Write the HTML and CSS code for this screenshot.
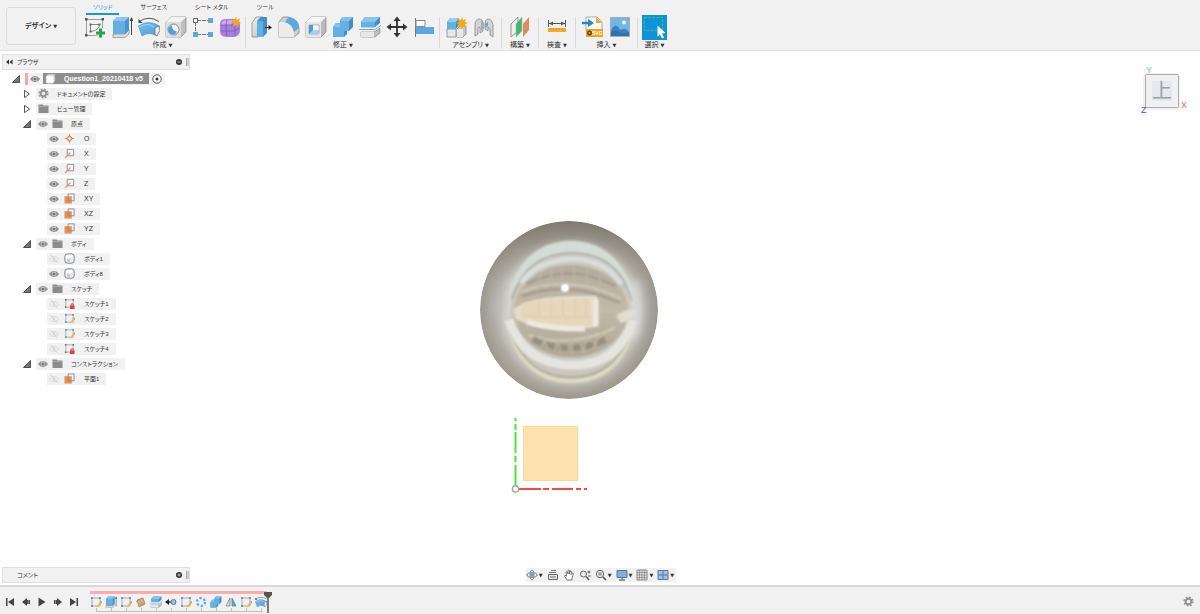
FILE: index.html
```html
<!DOCTYPE html>
<html lang="ja">
<head>
<meta charset="utf-8">
<meta name="viewport" content="width=device-width, initial-scale=1">
<title>Question1_20210418 v5</title>
<link rel="stylesheet" href="styles.css">
</head>
<body>
<svg class="defs" aria-hidden="true">
  <defs>
    <linearGradient id="g-blue" x1="0" y1="0" x2="1" y2="1"><stop offset="0" stop-color="#79bdec"/><stop offset="1" stop-color="#4f9fd8"/></linearGradient>
    <linearGradient id="g-grey" x1="0" y1="0" x2="1" y2="1"><stop offset="0" stop-color="#f4f4f4"/><stop offset="1" stop-color="#b9b9b9"/></linearGradient>
  </defs>
  <!-- tree icons -->
  <symbol id="eye" viewBox="0 0 10 10"><path d="M0 5Q2 2 5 2t5 3Q8 8.200 5 8.200T0 5Z" fill="#8f8f8f"/><circle cx="5" cy="5" r="2.300" fill="#d6d6d6"/><circle cx="5" cy="5" r="1.600" fill="#777"/></symbol>
  <symbol id="eye-off" viewBox="0 0 10 10"><path d="M.5 5Q2 2.500 5 2.500T9.500 5Q8 7.700 5 7.700T.5 5Z" fill="none" stroke="#d9d9d9"/><circle cx="5" cy="5" r="1.500" fill="#d9d9d9"/><path d="M1.500 1l7 8" stroke="#d4d4d4"/></symbol>
  <symbol id="folder" viewBox="0 0 11 10"><path d="M.5 1h4l1 1h5v7.500H.5Z" fill="#8b8b8b"/><path d="M.5 3h10" stroke="#b5b5b5" stroke-width=".6"/></symbol>
  <symbol id="gear" viewBox="0 0 12 12"><circle cx="6" cy="6" r="4.600" fill="none" stroke="#939393" stroke-width="2" stroke-dasharray="1.900 1.710"/><circle cx="6" cy="6" r="3" fill="none" stroke="#939393" stroke-width="2"/></symbol>
  <symbol id="open" viewBox="0 0 8 8"><path d="M7.500.5v7H.5Z" fill="#777" stroke="#333" stroke-width=".8"/></symbol>
  <symbol id="closed" viewBox="0 0 8 8"><path d="M1.500.3 6.500 4 1.500 7.700Z" fill="#fff" stroke="#444" stroke-width=".9"/></symbol>
  <symbol id="point" viewBox="0 0 12 12"><path d="M6 1v10M1 6h10" stroke="#e08a55"/><path d="M6 3 9 6 6 9 3 6Z" fill="#fff" stroke="#de7f46" stroke-width="1.300"/></symbol>
  <symbol id="axis" viewBox="0 0 12 12"><path d="M3.500 1.500h7v7h-7Z" fill="#f7f7f7" stroke="#8b8f94"/><path d="M1 11 7 5" stroke="#e58b57" stroke-width="1.200"/></symbol>
  <symbol id="plane" viewBox="0 0 12 12"><path d="M4.500 1h6.500v7.500H4.500Z" fill="#f7f7f7" stroke="#85898c"/><path d="M.5 3.500h8V11.500h-8Z" fill="#e39257"/><path d="M4.500 4v4.500H8" fill="none" stroke="#c4763d" stroke-width=".8"/></symbol>
  <symbol id="body" viewBox="0 0 12 12"><rect x="1" y="1" width="10" height="10" rx="2.500" fill="#fdfdfd" stroke="#6f7580"/><path d="M3 6h3.500v4H3Z" fill="#ccd0d6"/><path d="M6.500 5h3v4.500h-3Z" fill="#e6e8eb"/></symbol>
  <symbol id="sk-lock" viewBox="0 0 12 12"><path d="M2 2h8v8H2Z" fill="none" stroke="#999" stroke-width=".8"/><path d="M1 1h1.700v1.700H1ZM9.300 1H11v1.700H9.300ZM1 9.300h1.700V11H1Z" fill="#6e6e6e"/><path d="M6.500 8h5v4h-5Z" fill="#db4047"/><path d="M7.700 8V6.500h2.500V8" fill="none" stroke="#db4047"/></symbol>
  <symbol id="sk" viewBox="0 0 12 12"><path d="M2 2h8v8H2Z" fill="none" stroke="#999" stroke-width=".8"/><path d="M1 1h2v2H1ZM9 1h2v2H9ZM1 9h2v2H1Z" fill="#4da3df"/><path d="m6.500 11.500.5-2 4-4 1 1.500L8 11Z" fill="#f4b63e"/><path d="m10.400 5.700.9-.7.7 1.300-.8.800Z" fill="#df665b"/></symbol>
  <symbol id="cube" viewBox="0 0 12 12"><path d="M1 3.500 3.500 1H11v7.500L8.500 11H1Z" fill="#c7c7c7"/><rect x="1.500" y="3" width="8" height="8" rx="1.500" fill="#fff" stroke="#e2e2e2"/></symbol>
  <symbol id="target" viewBox="0 0 10 10"><circle cx="5" cy="5" r="4.200" fill="#fff" stroke="#444" stroke-width=".9"/><circle cx="5" cy="5" r="1.500" fill="#333"/></symbol>
  <!-- create -->
  <symbol id="i-sketch" viewBox="0 0 22 22"><path d="M2.500 3.500h16v16h-16Z" fill="none" stroke="#888" stroke-width=".8"/><path d="M1 2h2.500v2.500H1ZM17.500 2H20v2.500h-2.500ZM1 18h2.500v2.500H1Z" fill="#555"/><path d="M6.500 15.500V8.500H15.500Q15 14.500 6.500 15.500Z" fill="#f5f5f5" stroke="#777" stroke-width=".9"/><path d="M5.500 7.500h2v2h-2ZM14.500 7.500h2v2h-2ZM5.500 14.500h2v2h-2Z" fill="#666"/><path d="M16.500 12v10M11.500 17h10" stroke="#f1f1f1" stroke-width="5"/><path d="M16.500 12.500v9M12 17h9" stroke="#21a847" stroke-width="3"/></symbol>
  <symbol id="i-extrude" viewBox="0 0 22 22"><path d="M2 18h12l4-4v4l-4 3.500H2Z" fill="#ddd" stroke="#888" stroke-width=".7"/><path d="M2 5 6 1h12v13l-4 4H2Z" fill="#4897cf"/><path d="M2 5h12v13H2Z" fill="#65afe3"/><path d="M2 5 6 1h12l-4 4Z" fill="#8cc7ef"/><path d="M20.500 19V4" stroke="#444"/><path d="m18.500 5 2-4 2 4Z" fill="#444"/></symbol>
  <symbol id="i-revolve" viewBox="0 0 22 22"><path d="M1 5.500Q11-1 21 5.500" fill="none" stroke="#555"/><path d="M.5 3v4h4Z" fill="#444"/><path d="M.5 10Q10 3 21.500 10L19 20q-8-5-15 0Z" fill="url(#g-blue)" stroke="#438dc5" stroke-width=".6"/><path d="M1 11q10-5 15 0" fill="none" stroke="#a1d1f1"/><path d="m17 12 4-2 .7 4.500L19 20l-2-2Z" fill="#eee" stroke="#777" stroke-width=".8"/></symbol>
  <symbol id="i-hole" viewBox="0 0 22 22"><path d="M1 6 6 1h15v15l-5 5H1Z" fill="#bfbfbf" stroke="#888" stroke-width=".7"/><path d="M1 6h15v15H1Z" fill="#dedede"/><path d="M1 6 6 1h15l-5 5Z" fill="#f3f3f3"/><circle cx="8.500" cy="13.500" r="5.500" fill="#f5f5f5" stroke="#858585"/><path d="M7 9.500a4.500 4.500 0 1 0 5 6Q7 15 7 9.500Z" fill="#4da2dc"/></symbol>
  <symbol id="i-pattern" viewBox="0 0 22 22"><path d="M5 4.500h12M3.500 6v12M5 18.500h12" stroke="#777" stroke-dasharray="4 1"/><rect x="1.500" y="2.500" width="4" height="4" fill="#fff" stroke="#666"/><path d="M16 2h5v5h-5ZM1 16h5v5H1ZM16 16h5v5h-5Z" fill="#5aa9e1"/></symbol>
  <symbol id="i-form" viewBox="0 0 22 22"><path d="M1 8Q1 3 7 3h8q6 1 6 6v5q0 6-6 7H8q-7 0-7-6Z" fill="#a67fdd"/><path d="M2 9Q3 4 8 4h6l-2 5Z" fill="#c9aaf0"/><path d="M2 9h12q2 0 2 3v8M8 4Q6 8 8 20M2 15h13l5-3M14 9l4-4" fill="none" stroke="#7d52bb" stroke-width=".8"/><path d="m17 0 1 4 3-2-1 3.500 2 1.500-3 .7.500 3.300-2.500-2-3 2 .5-3.500L11 7l3.300-1L13 2l3 2Z" fill="#f8a815"/></symbol>
  <!-- modify -->
  <symbol id="i-press" viewBox="0 0 22 22"><path d="M1 7 5 1h7v14l-5 6H1Z" fill="url(#g-grey)" stroke="#888" stroke-width=".8"/><path d="M6 5 10 1h6v16l-4 4H6Z" fill="#3f90cc"/><path d="M6 5h6v16H6Z" fill="#64afe3"/><path d="M14 11.500h5" stroke="#222"/><path d="m17.500 9 3.500 2.500-3.500 2.500Z" fill="#222"/></symbol>
  <symbol id="i-fillet" viewBox="0 0 22 22"><path d="M1 6 5 1h5q11 2 11 12v4l-5 4H1Z" fill="#cecece" stroke="#888" stroke-width=".8"/><path d="M1 6h4q11 2 11 11v4H1Z" fill="#ececec"/><path d="M7 6 11 1q10 2 10 11l-5 4Q14 8 7 6Z" fill="#5ba9df"/></symbol>
  <symbol id="i-shell" viewBox="0 0 22 22"><path d="M1 6 6 1h15v15l-5 5H1Z" fill="#b9b9b9" stroke="#888" stroke-width=".7"/><path d="M1 6h15v15H1Z" fill="#e7e7e7"/><path d="M1 6 6 1h15l-5 5Z" fill="#f6f6f6"/><path d="M4 9h10v9H4Z" fill="#fff" stroke="#888" stroke-width=".6"/><path d="M4 9v9h10v-4H8V9Z" fill="#4a9ed8"/><path d="M8 14h6v4H4Z" fill="#9fd0f2"/></symbol>
  <symbol id="i-combine" viewBox="0 0 22 22"><path d="M1 11 4 7h4V4l3-3h10v10l-4 4h-2v3l-3 3H1Z" fill="#3e8fcc"/><path d="M1 11h7V5h9v10h-5v6H1Z" fill="#64afe3"/><path d="m8 5 3-4h10l-4 4ZM1 11l3-4h4v4Z" fill="#83c1ed"/></symbol>
  <symbol id="i-split" viewBox="0 0 22 22"><path d="M2 16h13l6-4v5l-5 4H2Z" fill="#bdbdbd" stroke="#888" stroke-width=".7"/><path d="M2 16h13v5H2Z" fill="#e7e7e7"/><path d="M0 13h16l6-4" fill="none" stroke="#fff" stroke-width="3"/><path d="M0 13.500h16l6-4" fill="none" stroke="#59abe4"/><path d="M2 6 6 1h15v6l-5 4H2Z" fill="#3f90cd"/><path d="M2 6h14v5.500H2Z" fill="#64afe3"/><path d="M2 6 6 1h15l-5 5Z" fill="#87c5ef"/></symbol>
  <symbol id="i-move" viewBox="0 0 22 22"><path d="M11 3v16M3 11h16" stroke="#333" stroke-width="1.800"/><path d="m7.500 5L11 .5 14.500 5ZM7.500 17l3.500 4.500 3.500-4.500ZM5 7.500.5 11 5 14.500ZM17 7.500l4.500 3.500-4.500 3.500Z" fill="#333"/></symbol>
  <symbol id="i-align" viewBox="0 0 22 22"><path d="M2.500 2v19" stroke="#777"/><path d="M3 4.500h9v6H3Z" fill="#fff" stroke="#888"/><path d="M3 11h18v7H3Z" fill="#5aa8df"/></symbol>
  <!-- assemble / construct / inspect / insert / select -->
  <symbol id="i-comp" viewBox="0 0 22 22"><path d="M1 13h9v8H1Z" fill="#e7e7e7" stroke="#858585" stroke-width=".8"/><path d="m11 13 3-3h6v8l-3 3h-6Z" fill="#c8c8c8" stroke="#858585" stroke-width=".8"/><path d="M11 13h6v8h-6Z" fill="#e7e7e7"/><path d="m1 6 3-4h9v7l-3 4H1Z" fill="#408fca"/><path d="M1 6h9v7H1Z" fill="#65afe3"/><path d="m1 6 3-4h9l-3 4Z" fill="#96cff3"/><path d="m16 1 1 3 3-1-1 3 3 1-3 1.500 1 3-3-1-1 2.500-1.500-3-3 1 1-3L10 7l3-1-1-3 3 1Z" fill="#f8a815"/></symbol>
  <symbol id="i-joint" viewBox="0 0 22 22"><path d="M2 20V9q0-6 5-6 3 1 3 4v8l-3 2v-6l-2 1v6Z" fill="#d4d4d4" stroke="#888" stroke-width=".8"/><path d="m8 5 3 2v5l-3 3Z" fill="#aaa"/><path d="M20 21V9q-1-6-5-6-3 1-3 4v6l3 2v-4l2 2v6Z" fill="#d4d4d4" stroke="#888" stroke-width=".8"/><path d="m12 8 3-2v4l-3 2Z" fill="#5ca6df"/></symbol>
  <symbol id="i-construct" viewBox="0 0 22 22"><path d="M2 8 9 1v14l-7 6Z" fill="#eee" stroke="#888" stroke-width=".9"/><path d="m7 8 6-7v14l-6 6Z" fill="#46b46d" stroke="#87c99e" stroke-width=".6"/><path d="m14 8 6-7v13l-6 7Z" fill="#df8b5d"/></symbol>
  <symbol id="i-measure" viewBox="0 0 22 22"><path d="M2.500 4v7M19.500 4v7M3 7.500h16" stroke="#555"/><path d="m3 7.500 4-2v4ZM19 7.500l-4-2v4Z" fill="#555"/><path d="M2 12h18v4H2Z" fill="#f4ab28"/><path d="M4.500 12v2M7.500 12v2M10.500 12v2M13.500 12v2M16.500 12v2" stroke="#c98a1e" stroke-width=".7"/></symbol>
  <symbol id="i-image" viewBox="0 0 22 22"><path d="M1.500 1.500h19v19h-19Z" fill="#70b7e8" stroke="#aab"/><path d="M2 14q5-8 8-2 1 3 4 1 3-1 6 3v4H2Z" fill="#3a83ba"/><path d="M2 17q4-4 8-1 3 2 10 0v4H2Z" fill="#2d74ae"/><circle cx="15" cy="6.500" r="2" fill="#fff4c4"/></symbol>
  <symbol id="i-select" viewBox="0 0 25 25"><path d="M0 0h25v25H0Z" fill="#0c94d6"/><path d="M2.500 2.500h18v13h-18Z" fill="none" stroke="#45bd7d" stroke-dasharray="2.500 1.500"/><path d="M15.500 10.500v11l2.500-2 2 4 2-1-2-4 3.500-.5Z" fill="#fff"/></symbol>
  <!-- timeline -->
  <symbol id="t-rect" viewBox="0 0 12 12"><path d="m2 4 6-2 2 6-6 3Z" fill="#eba987" stroke="#90785f" stroke-width=".7"/><path d="M1 6 7 2M4 10l6-4M4 3l4 6" stroke="#79a66e" stroke-width=".7"/></symbol>
  <symbol id="t-move" viewBox="0 0 12 12"><path d="M3 6h5" stroke="#222" stroke-width="1.300"/><path d="M4 3 0 6l4 3Z" fill="#222"/><circle cx="8.500" cy="6" r="2.500" fill="#a4bfe8" stroke="#5c7199"/></symbol>
  <symbol id="t-circ" viewBox="0 0 12 12"><circle cx="6" cy="6" r="4" fill="none" stroke="#5daae2" stroke-width="2.300" stroke-dasharray="2.300 1.890"/></symbol>
  <symbol id="t-mirror" viewBox="0 0 12 12"><path d="M5 2v8H1Z" fill="#ddd" stroke="#777" stroke-width=".7"/><path d="M7 2v8h4Z" fill="#5ca9df" stroke="#4280b0" stroke-width=".7"/></symbol>
  <symbol id="p-first" viewBox="0 0 10 10"><path d="M1 1h1.500v8H1ZM9 1v8L3 5Z" fill="#444"/></symbol>
  <symbol id="p-prev" viewBox="0 0 10 10"><path d="M6 1v8L1 5ZM6 3h3v4H6Z" fill="#444"/><path d="M7.500 3v4" stroke="#aaa" stroke-width=".7"/></symbol>
  <symbol id="p-play" viewBox="0 0 10 10"><path d="m1.500.5 7 4.500-7 4.500Z" fill="#444"/></symbol>
  <!-- navigation -->
  <symbol id="n-orbit" viewBox="0 0 12 12"><ellipse cx="6" cy="6" rx="5" ry="2.300" fill="none" stroke="#777"/><ellipse cx="6" cy="6" rx="2" ry="5" fill="none" stroke="#888"/><path d="M6 4v4M4 6h4" stroke="#4f9dd5" stroke-width="1.300"/></symbol>
  <symbol id="n-look" viewBox="0 0 12 12"><path d="M1.500 5.500h9v5h-9Z" fill="#e3e3e3" stroke="#686868"/><path d="M2 3.500h7M4 1.500h5M3 8h6" stroke="#707070"/></symbol>
  <symbol id="n-hand" viewBox="0 0 12 12"><path d="M4 11 1.500 7q0-1.500 2 0L3 3q1-1 1.500 0L5 5V1.500q1-1 1.500 0V5l.7-3q1-.6 1.300.5L8 5.500 9.500 4q1 0 .8 1L9 9v2Z" fill="#fff" stroke="#666" stroke-width=".9"/></symbol>
  <symbol id="n-zoom" viewBox="0 0 12 12"><circle cx="4.500" cy="5" r="3" fill="#e9f2f8" stroke="#666"/><path d="m7 7.500 3 3.500" stroke="#555" stroke-width="1.500"/><path d="M8.500 3h3M10 1.500v3M9 7h3" stroke="#555" stroke-width=".9"/></symbol>
  <symbol id="n-fit" viewBox="0 0 12 12"><circle cx="5" cy="5" r="3.700" fill="#e5e5e5" stroke="#666"/><path d="M3.500 3.500h3v3h-3Z" fill="#8c9aa6"/><path d="m8 8 3 3" stroke="#555" stroke-width="1.700"/></symbol>
  <symbol id="n-disp" viewBox="0 0 12 12"><path d="M1 1.500h10v7H1Z" fill="#82b0de" stroke="#5e728d"/><path d="M3 11h6M6 8v3" stroke="#777" stroke-width="1.300"/></symbol>
  <symbol id="n-grid" viewBox="0 0 12 12"><path d="M1 1h10v10H1Z" fill="#ddd" stroke="#888"/><path d="M3.500 1v10M6 1v10M8.500 1v10M1 3.500h10M1 6h10M1 8.500h10" stroke="#888" stroke-width=".7"/></symbol>
  <symbol id="n-view" viewBox="0 0 12 12"><path d="M1 1.500h10v9H1Z" fill="#9cc3ea" stroke="#5a7699"/><path d="M6 1v10M1 6h10" stroke="#5a7699"/></symbol>
</svg>

<div class="app">
  <header class="ribbon">
    <button class="workspace" type="button">デザイン <span class="caret">▼</span></button>
    <div class="ribbon-main">
      <nav class="tabs" aria-label="ツールバー">
        <button class="tab tab-on" type="button">ソリッド</button>
        <button class="tab" type="button">サーフェス</button>
        <button class="tab" type="button">シート メタル</button>
        <button class="tab" type="button">ツール</button>
      </nav>
      <div class="groups">
        <section class="group">
          <div class="tools">
            <button type="button" aria-label="スケッチを作成"><svg><use href="#i-sketch"/></svg></button>
            <button type="button" aria-label="押し出し"><svg><use href="#i-extrude"/></svg></button>
            <button type="button" aria-label="回転"><svg><use href="#i-revolve"/></svg></button>
            <button type="button" aria-label="穴"><svg><use href="#i-hole"/></svg></button>
            <button type="button" aria-label="パターン"><svg><use href="#i-pattern"/></svg></button>
            <button type="button" aria-label="フォームを作成"><svg><use href="#i-form"/></svg></button>
          </div>
          <button class="group-name" type="button">作成 <span class="caret">▼</span></button>
        </section>
        <section class="group">
          <div class="tools">
            <button type="button" aria-label="プレス/プル"><svg><use href="#i-press"/></svg></button>
            <button type="button" aria-label="フィレット"><svg><use href="#i-fillet"/></svg></button>
            <button type="button" aria-label="シェル"><svg><use href="#i-shell"/></svg></button>
            <button type="button" aria-label="結合"><svg><use href="#i-combine"/></svg></button>
            <button type="button" aria-label="分割"><svg><use href="#i-split"/></svg></button>
            <button type="button" aria-label="移動"><svg><use href="#i-move"/></svg></button>
            <button type="button" aria-label="位置合わせ"><svg><use href="#i-align"/></svg></button>
          </div>
          <button class="group-name" type="button">修正 <span class="caret">▼</span></button>
        </section>
        <section class="group group-wide">
          <div class="tools">
            <button type="button" aria-label="新規コンポーネント"><svg><use href="#i-comp"/></svg></button>
            <button type="button" aria-label="ジョイント"><svg><use href="#i-joint"/></svg></button>
          </div>
          <button class="group-name" type="button">アセンブリ <span class="caret">▼</span></button>
        </section>
        <section class="group group-single">
          <div class="tools"><button type="button" aria-label="オフセット平面"><svg><use href="#i-construct"/></svg></button></div>
          <button class="group-name" type="button">構築 <span class="caret">▼</span></button>
        </section>
        <section class="group group-single">
          <div class="tools"><button type="button" aria-label="計測"><svg><use href="#i-measure"/></svg></button></div>
          <button class="group-name" type="button">検査 <span class="caret">▼</span></button>
        </section>
        <section class="group group-wide">
          <div class="tools">
            <button type="button" aria-label="SVGを挿入"><svg viewBox="0 0 22 22"><path d="M4 1h11l5 5v8H4Z" fill="#fafafa" stroke="#999" stroke-width=".8"/><path d="M14 1v6h6Z" fill="#f3a420"/><path d="M4 13h17v8H4Z" fill="#f0a321"/><circle cx="7.500" cy="17" r="1.800" fill="none" stroke="#59420d" stroke-width="1.400"/><text x="10" y="19" class="svg-badge">SVG</text><path d="M0 7h7" stroke="#2787cd" stroke-width="2.500"/><path d="M6 3l6 4-6 4Z" fill="#2787cd"/></svg></button>
            <button type="button" aria-label="キャンバス"><svg><use href="#i-image"/></svg></button>
          </div>
          <button class="group-name" type="button">挿入 <span class="caret">▼</span></button>
        </section>
        <section class="group group-last">
          <div class="tools tools-big"><button type="button" aria-label="選択"><svg><use href="#i-select"/></svg></button></div>
          <button class="group-name" type="button">選択 <span class="caret">▼</span></button>
        </section>
      </div>
    </div>
  </header>

  <main class="canvas">
    <svg class="sphere" viewBox="0 0 180 180" role="img" aria-label="ボディ8">
      <defs>
        <radialGradient id="s-rim"><stop offset="0" stop-color="#ccc9bf"/><stop offset=".72" stop-color="#c4c3b9"/><stop offset=".86" stop-color="#aeaba3"/><stop offset="1" stop-color="#9c978c"/></radialGradient>
        <linearGradient id="s-top" x1="0" y1="0" x2="0" y2="1"><stop offset="0" stop-color="#736c60" stop-opacity=".7"/><stop offset=".35" stop-color="#8a867b" stop-opacity="0"/></linearGradient>
        <linearGradient id="s-lens" x1="0" y1="0" x2="0" y2="1"><stop offset="0" stop-color="#b3ac9e"/><stop offset=".5" stop-color="#c3b9a8"/><stop offset="1" stop-color="#afa696"/></linearGradient>
        <linearGradient id="s-halo" x1="0" y1="0" x2="0" y2="1"><stop offset="0" stop-color="#d6ddd6"/><stop offset=".5" stop-color="#d6d6d1"/><stop offset="1" stop-color="#c8c6ba"/></linearGradient>
        <filter id="b1" filterUnits="userSpaceOnUse" x="0" y="0" width="180" height="180"><feGaussianBlur stdDeviation="1.300"/></filter>
        <filter id="b3" filterUnits="userSpaceOnUse" x="-10" y="-10" width="200" height="200"><feGaussianBlur stdDeviation="4"/></filter>
        <clipPath id="s-clip"><circle cx="90" cy="90" r="89"/></clipPath>
      </defs>
      <g clip-path="url(#s-clip)">
        <circle cx="90" cy="90" r="89" fill="url(#s-rim)"/>
        <circle cx="90" cy="90" r="89" fill="url(#s-top)"/>
        <ellipse cx="92" cy="94" rx="67" ry="70" fill="url(#s-halo)" filter="url(#b3)"/>
        <path d="M32 66Q50 21 92 21t60 45q4 12 3 22Q143 34 92 34 52 35 31 76Z" fill="#d5dcd5" filter="url(#b1)"/>
        <ellipse cx="92" cy="95" rx="61" ry="62" fill="#cac8bd" filter="url(#b1)"/>
        <path d="M33 79Q47 33 93 33t60 48" fill="none" stroke="#a3a69f" stroke-width="1.500" filter="url(#b1)"/>
        <path d="M42 63Q60 40 92 39t50 25" fill="none" stroke="#d9dedb" stroke-width="5" filter="url(#b1)"/>
        <path d="M30 106Q44 161 92 161t62-55" fill="none" stroke="#dfdac4" stroke-width="4" filter="url(#b1)"/>
        <path d="M29 104Q45 157 92 157t62-52" fill="none" stroke="#a4a393" stroke-width="1.300" filter="url(#b1)"/>
        <path d="M30 100Q45 144 92 145t62-45" fill="none" stroke="#e5e5df" stroke-width="9" filter="url(#b1)"/>
        <ellipse cx="92" cy="91" rx="57" ry="46" fill="url(#s-lens)" filter="url(#b1)"/>
        <g fill="none" filter="url(#b1)">
          <path d="M48 64Q90 42 136 66M43 76Q90 59 141 83" stroke="#a79e90" stroke-width="3"/>
          <path d="M42 72Q91 53 143 79M49 115Q91 129 136 108" stroke="#d0c6b5" stroke-width="2.500"/>
          <path d="M54 119Q90 137 128 119" stroke="#968d7e" stroke-width="6" stroke-dasharray="10 3"/>
          <path d="M61 52v16M72 48v18M83 47v18M95 46v18M108 48v18M121 54v16M62 114l7 15M78 116l4 17M93 117v17M108 115l-4 18M123 111l-9 18" stroke="#bfb6a5" stroke-width="1.500"/>
        </g>
        <path d="M34 90Q50 74 118 76v31Q62 113 37 99Z" fill="#e6ddcd" filter="url(#b1)"/>
        <path d="M43 84Q67 79 112 79v27Q62 108 41 97Z" fill="#e6d7bb" filter="url(#b1)"/>
        <path d="M46 96Q79 99 112 97M60 81v14M72 79v17M84 79v17M96 79v17M107 79v17" fill="none" stroke="#d3c5aa" stroke-width=".8" filter="url(#b1)"/>
        <path d="M117 79v27M48 102Q77 110 106 109" fill="none" stroke="#eeeae2" stroke-width="5" filter="url(#b1)"/>
        <path d="M137 96Q150 86 158 92 153 101 142 103Z" fill="#e2dccf" filter="url(#b1)"/>
        <path d="M156 62q7 32-2 56" fill="none" stroke="#e0e0e2" stroke-width="6" filter="url(#b3)"/>
        <ellipse cx="18" cy="86" rx="3" ry="13" fill="#b9b9bc" filter="url(#b3)"/>
        <circle cx="86" cy="68" r="4" fill="#fff" filter="url(#b1)"/><circle cx="86" cy="68" r="3" fill="#fff"/>
      </g>
    </svg>

    <svg class="origin" viewBox="0 0 80 80" role="img" aria-label="原点">
      <path d="M13.500 11.500h54v54h-54Z" fill="#fee3b1" stroke="#fbd694"/>
      <path d="M5.500 3v69" stroke="#48e935" stroke-width="2" stroke-dasharray="3 3 6 2 21 3 6 3 30 2"/>
      <path d="M77 74H8" stroke="#fa493d" stroke-width="2" stroke-dasharray="3 3 5 3 21 3 6 2 30 2"/>
      <circle cx="5.500" cy="74" r="3.200" fill="#fff" stroke="#9b9b9b" stroke-width="1.300"/>
    </svg>

    <svg class="viewcube" viewBox="0 0 56 56" role="img" aria-label="ビューキューブ 上">
      <rect x="7" y="11" width="37" height="37" rx="4" class="cube-shadow"/>
      <rect x="9.500" y="12.500" width="33" height="33" rx="1" fill="#f1f1f2" stroke="#ababab"/>
      <path d="M16 19h20v20H16Z" fill="#e5e8ed"/>
      <text x="26" y="36" class="cube-face">上</text>
      <text x="10" y="11" class="axis-y">Y</text>
      <text x="5" y="51" class="axis-z">Z</text>
      <text x="45" y="46" class="axis-x">X</text>
    </svg>

    <aside class="browser">
      <div class="panel-bar">
        <svg class="mini" viewBox="0 0 8 8"><path d="M4 1.500v5L1 4ZM7.500 1.500v5L4.500 4Z" fill="#333"/></svg>
        <h2 class="panel-title">ブラウザ</h2>
        <button class="round" type="button" aria-label="折りたたむ"><svg viewBox="0 0 8 8"><circle cx="4" cy="4" r="3" fill="#333"/><path d="M2.500 4h3" stroke="#ccc"/></svg></button>
        <span class="grip"></span>
      </div>
      <ul class="tree">
        <li><div class="row"><svg class="twist"><use href="#open"/></svg><div class="chip chip-root"><svg class="eye"><use href="#eye"/></svg><span class="doc"><svg class="ico"><use href="#cube"/></svg>Question1_20210418 v5</span><svg class="eye"><use href="#target"/></svg></div></div>
          <ul>
            <li><div class="row"><svg class="twist"><use href="#closed"/></svg><div class="chip"><svg class="ico"><use href="#gear"/></svg><span>ドキュメントの設定</span></div></div></li>
            <li><div class="row"><svg class="twist"><use href="#closed"/></svg><div class="chip"><svg class="ico"><use href="#folder"/></svg><span>ビュー管理</span></div></div></li>
            <li><div class="row"><svg class="twist"><use href="#open"/></svg><div class="chip"><svg class="eye"><use href="#eye"/></svg><svg class="ico"><use href="#folder"/></svg><span>原点</span></div></div>
              <ul class="latin">
                <li class="row leaf"><div class="chip"><svg class="eye"><use href="#eye"/></svg><svg class="ico"><use href="#point"/></svg><span>O</span></div></li>
                <li class="row leaf"><div class="chip"><svg class="eye"><use href="#eye"/></svg><svg class="ico"><use href="#axis"/></svg><span>X</span></div></li>
                <li class="row leaf"><div class="chip"><svg class="eye"><use href="#eye"/></svg><svg class="ico"><use href="#axis"/></svg><span>Y</span></div></li>
                <li class="row leaf"><div class="chip"><svg class="eye"><use href="#eye"/></svg><svg class="ico"><use href="#axis"/></svg><span>Z</span></div></li>
                <li class="row leaf"><div class="chip"><svg class="eye"><use href="#eye"/></svg><svg class="ico"><use href="#plane"/></svg><span>XY</span></div></li>
                <li class="row leaf"><div class="chip"><svg class="eye"><use href="#eye"/></svg><svg class="ico"><use href="#plane"/></svg><span>XZ</span></div></li>
                <li class="row leaf"><div class="chip"><svg class="eye"><use href="#eye"/></svg><svg class="ico"><use href="#plane"/></svg><span>YZ</span></div></li>
              </ul>
            </li>
            <li><div class="row"><svg class="twist"><use href="#open"/></svg><div class="chip"><svg class="eye"><use href="#eye"/></svg><svg class="ico"><use href="#folder"/></svg><span>ボディ</span></div></div>
              <ul>
                <li class="row leaf"><div class="chip"><svg class="eye"><use href="#eye-off"/></svg><svg class="ico"><use href="#body"/></svg><span>ボディ1</span></div></li>
                <li class="row leaf"><div class="chip"><svg class="eye"><use href="#eye"/></svg><svg class="ico"><use href="#body"/></svg><span>ボディ8</span></div></li>
              </ul>
            </li>
            <li><div class="row"><svg class="twist"><use href="#open"/></svg><div class="chip"><svg class="eye"><use href="#eye"/></svg><svg class="ico"><use href="#folder"/></svg><span>スケッチ</span></div></div>
              <ul>
                <li class="row leaf"><div class="chip"><svg class="eye"><use href="#eye-off"/></svg><svg class="ico"><use href="#sk-lock"/></svg><span>スケッチ1</span></div></li>
                <li class="row leaf"><div class="chip"><svg class="eye"><use href="#eye-off"/></svg><svg class="ico"><use href="#sk"/></svg><span>スケッチ2</span></div></li>
                <li class="row leaf"><div class="chip"><svg class="eye"><use href="#eye-off"/></svg><svg class="ico"><use href="#sk"/></svg><span>スケッチ3</span></div></li>
                <li class="row leaf"><div class="chip"><svg class="eye"><use href="#eye-off"/></svg><svg class="ico"><use href="#sk-lock"/></svg><span>スケッチ4</span></div></li>
              </ul>
            </li>
            <li><div class="row"><svg class="twist"><use href="#open"/></svg><div class="chip"><svg class="eye"><use href="#eye"/></svg><svg class="ico"><use href="#folder"/></svg><span>コンストラクション</span></div></div>
              <ul>
                <li class="row leaf"><div class="chip"><svg class="eye"><use href="#eye-off"/></svg><svg class="ico"><use href="#plane"/></svg><span>平面1</span></div></li>
              </ul>
            </li>
          </ul>
        </li>
      </ul>
    </aside>

    <div class="bottom">
      <div class="panel-bar">
        <span class="mini"></span>
        <h2 class="panel-title">コメント</h2>
        <button class="round" type="button" aria-label="コメントを追加"><svg viewBox="0 0 8 8"><circle cx="4" cy="4" r="3" fill="#333"/><path d="M2.500 4h3M4 2.500v3" stroke="#ccc"/></svg></button>
        <span class="grip"></span>
      </div>
      <div class="navbar">
        <button type="button" aria-label="オービット"><svg><use href="#n-orbit"/></svg><span class="caret">▼</span></button>
        <button type="button" aria-label="ビュー正面"><svg><use href="#n-look"/></svg></button>
        <button type="button" aria-label="画面移動"><svg><use href="#n-hand"/></svg></button>
        <button type="button" aria-label="ズーム"><svg><use href="#n-zoom"/></svg></button>
        <button type="button" aria-label="フィット"><svg><use href="#n-fit"/></svg><span class="caret">▼</span></button>
        <button type="button" aria-label="表示設定"><svg><use href="#n-disp"/></svg><span class="caret">▼</span></button>
        <button type="button" aria-label="グリッド"><svg><use href="#n-grid"/></svg><span class="caret">▼</span></button>
        <button type="button" aria-label="ビューポート"><svg><use href="#n-view"/></svg><span class="caret">▼</span></button>
      </div>
    </div>
  </main>

  <footer class="timeline">
    <div class="player">
      <button type="button" aria-label="先頭へ"><svg><use href="#p-first"/></svg></button>
      <button type="button" aria-label="前へ"><svg><use href="#p-prev"/></svg></button>
      <button type="button" aria-label="再生"><svg><use href="#p-play"/></svg></button>
      <button type="button" aria-label="次へ"><svg class="flip"><use href="#p-prev"/></svg></button>
      <button type="button" aria-label="末尾へ"><svg class="flip"><use href="#p-first"/></svg></button>
    </div>
    <div class="history">
      <div class="features">
        <button type="button" aria-label="スケッチ1"><svg><use href="#sk"/></svg></button>
        <button type="button" aria-label="押し出し1"><svg><use href="#i-extrude"/></svg></button>
        <button type="button" aria-label="スケッチ2"><svg><use href="#sk"/></svg></button>
        <button type="button" aria-label="平面1"><svg><use href="#t-rect"/></svg></button>
        <button type="button" aria-label="分割1"><svg><use href="#i-split"/></svg></button>
        <button type="button" aria-label="移動1"><svg><use href="#t-move"/></svg></button>
        <button type="button" aria-label="スケッチ3"><svg><use href="#sk"/></svg></button>
        <button type="button" aria-label="円形状パターン1"><svg><use href="#t-circ"/></svg></button>
        <button type="button" aria-label="結合1"><svg><use href="#i-combine"/></svg></button>
        <button type="button" aria-label="ミラー1"><svg><use href="#t-mirror"/></svg></button>
        <button type="button" aria-label="スケッチ4"><svg><use href="#sk"/></svg></button>
        <button type="button" aria-label="回転1"><svg><use href="#i-revolve"/></svg></button>
      </div>
      <svg class="marker" viewBox="0 0 8 21"><path d="M0 0h8v3L5 6H3L0 3Z" fill="#555"/><path d="M4 5v16" stroke="#555" stroke-width="1.500"/></svg>
    </div>
    <button class="settings" type="button" aria-label="設定"><svg><use href="#gear"/></svg></button>
  </footer>
</div>
</body>
</html>
```
FILE: styles.css
```css
* { box-sizing: border-box; }

body {
  margin: 0;
  background: #fff;
  color: #333;
  font: 7px/12px "Liberation Sans", "Noto Sans CJK JP", sans-serif;
  font-feature-settings: "palt";
}

button {
  margin: 0;
  padding: 0;
  border: 0;
  background: none;
  color: inherit;
  font: inherit;
  font-feature-settings: inherit;
}

svg { display: block; flex: none; }
ul { margin: 0; padding: 0; list-style: none; }
.defs { position: absolute; width: 0; height: 0; }
.app { display: flex; flex-direction: column; min-height: 100vh; }
.caret { font: 5px/8px "DejaVu Sans", sans-serif; }

/* Ribbon */
.ribbon {
  display: flex;
  gap: 3px;
  padding: 0 6px;
  background: #f1f1f1;
  border-bottom: 1px solid #e2e2e2;
}
.workspace {
  width: 70px;
  height: 38px;
  margin-top: 7px;
  border: 1px solid #dcdcdc;
  border-radius: 3px;
  font-weight: bold;
}
.tabs { display: flex; gap: 14px; padding-left: 7px; font-size: 6px; }
.tab { height: 15px; padding: 0 7px; border-bottom: 2px solid transparent; }
.tab-on { color: #1797d5; border-bottom-color: #1797d5; }
.groups { display: flex; height: 35px; }
.group {
  display: flex;
  flex-direction: column;
  align-items: center;
  padding: 0 5px;
  background: linear-gradient(#d9d9d9, #d9d9d9) right 2px / 1px 31px no-repeat;
}
.group.group-wide { padding: 0 7px 0 6px; }
.group.group-single { padding: 0 8px 0 7px; }
.group.group-last { padding: 0 4px; background: none; }
.tools { display: flex; align-items: center; gap: 5px; height: 24px; }
.tools svg { width: 22px; height: 22px; }
.tools-big svg { width: 25px; height: 25px; }
.group-name { height: 11px; line-height: 11px; white-space: nowrap; }
.svg-badge { font: bold 5px "Liberation Sans", sans-serif; fill: #fff; }

/* Canvas */
.canvas {
  position: relative;
  display: flex;
  flex: 1;
  flex-direction: column;
  justify-content: space-between;
  padding: 3px 0 2px 2px;
}
.sphere { position: absolute; left: calc(50% - 121px); top: 169px; width: 180px; height: 180px; }
.origin { position: absolute; left: calc(50% - 90px); top: 364px; width: 80px; height: 80px; }
.viewcube { position: absolute; right: 8px; top: 11px; width: 56px; height: 56px; }
.cube-shadow { fill: #000; opacity: .05; }
.cube-face { font: 20px "Noto Sans CJK JP", sans-serif; fill: #9aa0a5; text-anchor: middle; }
.axis-x, .axis-y, .axis-z { font: 9px "Liberation Sans", sans-serif; }
.axis-x { fill: #ff5c5c; }
.axis-y { fill: #5ce45c; }
.axis-z { fill: #4a4af4; }

/* Panels */
.panel-bar {
  display: flex;
  align-items: center;
  width: 188px;
  height: 16px;
  padding-left: 2px;
  background: #f1f1f1;
  border: 1px solid #e0e0e0;
}
.mini { width: 8px; height: 8px; }
.panel-title { flex: 1; margin: 0 0 0 4px; font-size: 6px; font-weight: normal; }
.round svg { width: 8px; height: 8px; }
.grip { width: 3px; height: 8px; margin-left: 3px; background: #ccc; border-left: 1px solid #aaa; }

/* Browser tree */
.tree { padding: 1px 0 0 9px; font-size: 6px; }
.tree ul { padding-left: 11px; }
.row { display: flex; align-items: center; height: 15px; }
.twist { width: 10px; height: 8px; margin-right: 4px; }
.chip {
  display: flex;
  align-items: center;
  gap: 8px;
  height: 12px;
  padding: 0 7px 0 2px;
  background: #f1f1f1;
  white-space: nowrap;
}
.chip .ico { margin-left: -4px; }
.chip .ico:first-child { margin-left: 0; }
.latin { font-size: 7px; }
.leaf { padding-left: 14px; }
.leaf .chip { gap: 9px; }
.chip.chip-root { gap: 3px; padding: 0 3px 0 2px; border-left: 3px solid #ffa3a8; }
.eye { width: 10px; height: 10px; }
.ico { width: 11px; height: 11px; }
.doc {
  display: flex;
  align-items: center;
  gap: 8px;
  height: 11px;
  padding: 0 7px 0 5px;
  background: #8e8e8e;
  color: #fff;
  font-size: 7px;
  font-weight: bold;
}
.chip .doc { padding-right: 6px; }
.chip .doc .ico { margin-left: -3px; }

/* Bottom strip */
.bottom { display: grid; grid-template-columns: 1fr auto 1fr; align-items: center; }
.navbar { display: flex; align-items: center; gap: 4px; height: 14px; padding: 0 2px 0 0; background: #f1f1f1; }
.navbar button { display: flex; align-items: center; gap: 1px; }
.navbar svg { width: 12px; height: 12px; }

/* Timeline */
.timeline {
  display: flex;
  align-items: center;
  height: 29px;
  padding: 0 6px 0 5px;
  background: #f1f1f1;
  border-top: 2px solid #d8d8d8;
}
.player { display: flex; gap: 6px; padding-top: 2px; }
.player svg { width: 10px; height: 10px; }
.flip { transform: scaleX(-1); }
.history { display: flex; align-items: flex-start; margin-left: 11px; padding-top: 3px; }
.features { display: flex; gap: 3px; height: 22px; padding: 2px 0 0; border-top: 3px solid #ffabad; }
.features button { display: flex; flex-direction: column; width: 12px; position: relative; }
.features svg { width: 12px; height: 12px; }
.features button::after {
  content: "";
  position: absolute;
  left: 6px;
  bottom: 1px;
  width: 16px;
  height: 3px;
  border-left: 1px solid #c0c0c0;
  border-bottom: 1px solid #c0c0c0;
}
.features button:last-child::after { width: 1px; }
.marker { width: 8px; height: 21px; margin: 1px 0 0 -3px; }
.settings { margin-left: auto; padding-top: 2px; }
.settings svg { width: 11px; height: 11px; }
```
